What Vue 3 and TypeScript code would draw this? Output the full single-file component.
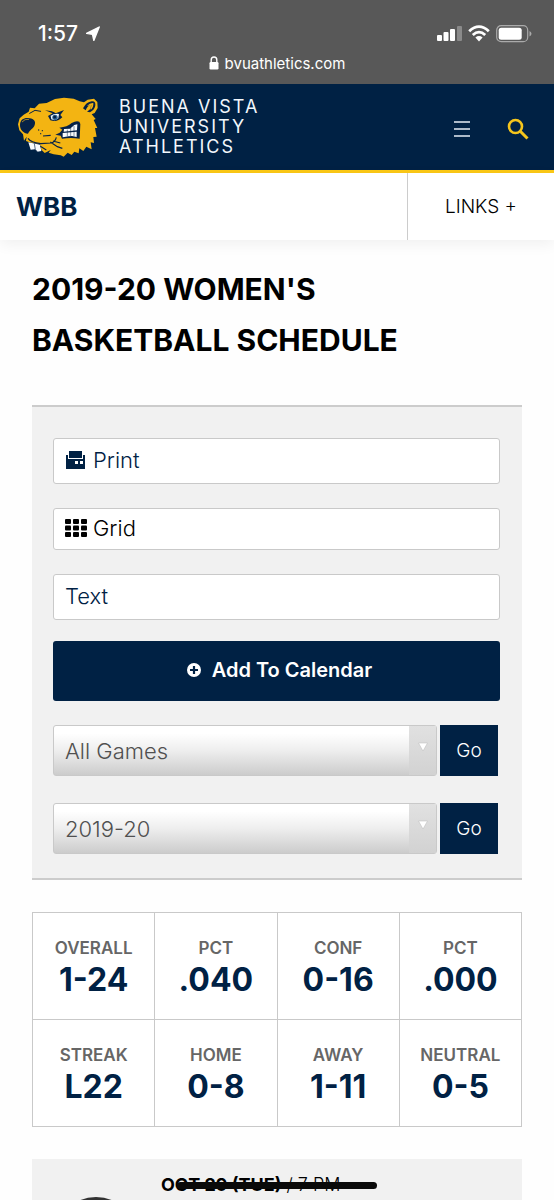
<script setup lang="ts">
import { ref } from 'vue'

interface Stat {
  label: string
  value: string
}

const rows: Stat[][] = [
  [
    { label: 'Overall', value: '1-24' },
    { label: 'Pct', value: '.040' },
    { label: 'Conf', value: '0-16' },
    { label: 'Pct', value: '.000' },
  ],
  [
    { label: 'Streak', value: 'L22' },
    { label: 'Home', value: '0-8' },
    { label: 'Away', value: '1-11' },
    { label: 'Neutral', value: '0-5' },
  ],
]

const games = ref('All Games')
const season = ref('2019-20')
</script>

<template>
  <div class="page">
    <div class="browser">
      <div class="status">
        <div class="clock">
          <span>1:57</span>
          <svg width="14" height="15" viewBox="0 0 14 15" aria-hidden="true">
            <path d="M13.2 1 0.6 7.4 6.5 8.3 7.8 14.4Z" fill="#fff" stroke="#fff" stroke-width="1.4" stroke-linejoin="round" />
          </svg>
        </div>
        <div class="signals">
          <svg width="25" height="17" viewBox="0 0 25 17" aria-hidden="true">
            <g fill="#fff">
              <rect x="0" y="10" width="5" height="6" rx="1" />
              <rect x="6.500" y="7" width="5" height="9" rx="1" />
              <rect x="13" y="4" width="5" height="12" rx="1" />
              <rect x="20" y="1" width="5" height="15" rx="1" opacity="0.3" />
            </g>
          </svg>
          <svg width="22" height="17" viewBox="0 0 22 17" aria-hidden="true">
            <g fill="none" stroke="#fff" stroke-width="2.800">
              <path d="M1.200 6.200Q11-3 20.800 6.200" />
              <path d="M4.800 10Q11 4.200 17.200 10" />
            </g>
            <path d="M7.400 12.500Q11 9.600 14.600 12.500L11 16.400Z" fill="#fff" />
          </svg>
          <svg width="36" height="18" viewBox="0 0 36 18" aria-hidden="true">
            <rect x="0.700" y="0.700" width="31" height="16" rx="4.500" fill="none" stroke="#aaa" stroke-width="1.200" />
            <rect x="2.700" y="2.700" width="23" height="12" rx="2.500" fill="#fff" />
            <path d="M33.500 6Q35.500 7 35.500 8.700T33.500 11.400Z" fill="#aaa" />
          </svg>
        </div>
      </div>
      <div class="address">
        <svg width="10" height="14" viewBox="0 0 10 14" aria-hidden="true">
          <rect x="0.500" y="6" width="9" height="7.500" rx="1.200" fill="#fff" />
          <path d="M2.200 6.500V4Q2.200 1 5 1T7.800 4V6.500" fill="none" stroke="#fff" stroke-width="1.400" />
        </svg>
        <span>bvuathletics.com</span>
      </div>
    </div>

    <header class="masthead">
      <a class="brand" href="#">
        <svg class="logo" viewBox="50 286 249 189" aria-hidden="true">
          <path
            fill="#f3b412"
            d="M85 333 89 321 103 323 116 309 139 307 164 295 191 291 220 294 238 302 251 305 262 297 281 294 291 304 292 322 283 337 274 341 286 355 280 358 291 382 284 382 289 408 279 409 281 427 271 425 274 446 258 438 249 451 237 443 235 458 222 453 214 463 202 456 190 468 181 464 160 461 145 456 151 448 133 457 123 447 119 430 87 425 77 421 79 408 71 420 68 401 57 389 53 371 58 353 70 342Z"
          />
          <path fill="#062247" d="M59 372C60 356 72 350 88 353C101 355 107 363 103 373C100 384 89 386 83 399C70 398 58 387 59 372Z" />
          <path fill="none" stroke="#f3b412" stroke-width="2" d="M65 364Q73 354 86 356" />
          <path fill="none" stroke="#062247" stroke-width="3" stroke-linecap="round" d="M88 338 104 329 121 332" />
          <path fill="#062247" d="M134 329Q159 331 166 338L191 328 180 343 186 350Q171 366 150 359L143 346 157 338Z" />
          <path fill="#f4f8fb" d="M151 345Q162 338 176 340L174 353Q165 362 153 356Z" />
          <circle cx="164" cy="350" r="8" fill="#2d6698" />
          <circle cx="163" cy="349" r="4.500" fill="#062247" />
          <path fill="#062247" d="M248 323Q258 304 274 302Q286 300 285 314Q284 327 269 335L260 333 271 324 272 312Q260 316 256 329Z" />
          <path fill="#f3b412" d="M260 316Q269 306 279 307Q280 320 271 328L273 314Z" />
          <path fill="#062247" d="M177 381Q201 379 214 367 228 359 237 363L240 370 238 414Q211 410 185 414L181 405 165 402 178 396 186 387Z" />
          <path fill="#f8fbfd" d="M191 385 209 384 222 373 231 371 230 389 190 393Z" />
          <path fill="#f8fbfd" d="M187 397 229 393 229 409 215 406 205 407 187 410Z" />
          <path fill="none" stroke="#062247" stroke-width="1.500" d="M201 387V407M211 382V406M221 376V407" />
          <path fill="#f8fbfd" d="M84 425 119 432 123 451 111 453 104 446 91 447Z" />
          <path fill="none" stroke="#062247" stroke-width="2" d="M102 429 105 447 111 453" />
          <path fill="none" stroke="#062247" stroke-width="3.500" d="M83 413Q91 425 121 429L151 427Q164 425 168 410M150 424 171 438 186 443M158 421 180 427M128 406 151 404M120 437 138 448" />
          <g fill="#062247">
            <circle cx="115" cy="388" r="2" />
            <circle cx="126" cy="390" r="2" />
            <circle cx="121" cy="399" r="2" />
          </g>
        </svg>
        <span class="brand-name">Buena Vista<br />University<br />Athletics</span>
      </a>
      <div class="tools">
        <button type="button" class="icon-button" aria-label="Menu">
          <svg width="16" height="18" viewBox="0 0 16 18" aria-hidden="true">
            <path d="M0 2H16M0 9H16M0 16H16" stroke="#e6edf5" stroke-width="1.500" />
          </svg>
        </button>
        <button type="button" class="icon-button" aria-label="Search">
          <svg width="22" height="22" viewBox="0 0 22 22" aria-hidden="true">
            <circle cx="8.500" cy="8.500" r="6.500" fill="none" stroke="#f5c51c" stroke-width="2.600" />
            <path d="M13 13 20.500 20.500" stroke="#f5c51c" stroke-width="3" />
          </svg>
        </button>
      </div>
    </header>

    <nav class="subnav">
      <a class="sport" href="#">WBB</a>
      <button type="button" class="links">LINKS +</button>
    </nav>

    <main class="content">
      <h1>2019-20 WOMEN'S BASKETBALL SCHEDULE</h1>

      <section class="panel">
        <a class="option" href="#">
          <svg width="22" height="18" viewBox="0 0 22 18" aria-hidden="true">
            <path
              fill="#002144"
              fill-rule="evenodd"
              d="M4 0H17V7H4ZM1 4H3V8H18V4H20V18H1ZM10 10V13H13V10ZM15 10V13H18V10Z"
            />
          </svg>
          <span>Print</span>
        </a>
        <a class="option grid-option" href="#">
          <svg width="22" height="18" viewBox="0 0 22 18" aria-hidden="true">
            <g fill="#000">
              <rect x="0" y="0" width="6" height="5" rx="1" />
              <rect x="8" y="0" width="6" height="5" rx="1" />
              <rect x="16" y="0" width="6" height="5" rx="1" />
              <rect x="0" y="6.500" width="6" height="5" rx="1" />
              <rect x="8" y="6.500" width="6" height="5" rx="1" />
              <rect x="16" y="6.500" width="6" height="5" rx="1" />
              <rect x="0" y="13" width="6" height="5" rx="1" />
              <rect x="8" y="13" width="6" height="5" rx="1" />
              <rect x="16" y="13" width="6" height="5" rx="1" />
            </g>
          </svg>
          <span>Grid</span>
        </a>
        <a class="option" href="#"><span>Text</span></a>
        <button type="button" class="calendar">
          <svg width="14" height="14" viewBox="0 0 14 14" aria-hidden="true">
            <circle cx="7" cy="7" r="7" fill="#fff" />
            <path d="M7 3V11M3 7H11" stroke="#002144" stroke-width="2.200" />
          </svg>
          <span>Add To Calendar</span>
        </button>
        <form class="filter" @submit.prevent>
          <div class="select">
            <select v-model="games" aria-label="Games">
              <option>All Games</option>
            </select>
            <span class="arrow">
              <svg width="10" height="10" viewBox="0 0 10 10" aria-hidden="true"><path d="M0.500 1H9.500L5 9Z" fill="#fff" stroke="#bbb" stroke-width="0.500" /></svg>
            </span>
          </div>
          <button type="submit">Go</button>
        </form>
        <form class="filter" @submit.prevent>
          <div class="select">
            <select v-model="season" aria-label="Season">
              <option>2019-20</option>
            </select>
            <span class="arrow">
              <svg width="10" height="10" viewBox="0 0 10 10" aria-hidden="true"><path d="M0.500 1H9.500L5 9Z" fill="#fff" stroke="#bbb" stroke-width="0.500" /></svg>
            </span>
          </div>
          <button type="submit">Go</button>
        </form>
      </section>

      <table class="record">
        <tbody>
          <tr v-for="(row, r) in rows" :key="r">
            <td v-for="(stat, c) in row" :key="c">
              <span class="stat-label">{{ stat.label }}</span>
              <strong class="stat-value">{{ stat.value }}</strong>
            </td>
          </tr>
        </tbody>
      </table>

      <article class="game">
        <p class="game-date"><strong>OCT 29 (TUE)</strong> / 7 PM<span class="strike"></span></p>
        <svg class="opponent" width="80" height="80" viewBox="0 0 80 80" aria-hidden="true">
          <circle cx="40" cy="40" r="38" fill="#444" stroke="#333" stroke-width="4" />
        </svg>
      </article>
    </main>
  </div>
</template>

<style>
body {
  margin: 0;
  background: #fff;
}
</style>

<style scoped>
.page {
  height: 100vh;
  overflow: hidden;
  background: #fefefe;
  color: #000;
  font-family: Inter, "Liberation Sans", sans-serif;
}

.page * {
  box-sizing: border-box;
}

svg {
  display: block;
  flex: none;
}

button,
select {
  margin: 0;
  border: 0;
  font-family: inherit;
}

a {
  color: inherit;
  text-decoration: none;
}

.browser {
  height: 84px;
  padding-top: 20px;
  background: #585858;
  color: #fff;
}

.status {
  display: flex;
  align-items: center;
  justify-content: space-between;
  height: 27px;
  padding: 0 22px 0 38px;
}

.clock {
  display: flex;
  align-items: center;
  gap: 8px;
  font-size: 21px;
  font-weight: 500;
}

.signals {
  display: flex;
  align-items: center;
  gap: 6px;
}

.address {
  display: flex;
  align-items: center;
  justify-content: center;
  gap: 6px;
  height: 32px;
  font-size: 15px;
}

.masthead {
  display: flex;
  align-items: center;
  justify-content: space-between;
  height: 89px;
  padding: 0 25px 0 17px;
  border-bottom: 3px solid #fcc917;
  background: #002144;
  color: #f2f7fc;
}

.brand {
  display: flex;
  align-items: center;
  gap: 19px;
}

.logo {
  width: 83px;
  height: 63px;
}

.brand-name {
  font-size: 18px;
  line-height: 20px;
  letter-spacing: 2px;
  text-transform: uppercase;
}

.tools {
  display: flex;
  align-items: center;
  gap: 37px;
  padding-top: 4px;
}

.icon-button {
  padding: 0;
  background: none;
}

.subnav {
  display: flex;
  justify-content: space-between;
  height: 67px;
  background: #fff;
  box-shadow: 0 4px 14px rgba(0, 0, 0, 0.06);
}

.sport {
  display: flex;
  align-items: center;
  padding-left: 16px;
  color: #002144;
  font-size: 26px;
  font-weight: 700;
}

.links {
  width: 147px;
  border-left: 1px solid #ccc;
  background: none;
  color: #000;
  font-size: 19px;
  font-weight: 300;
}

.content {
  display: flex;
  flex-direction: column;
  gap: 32px;
  padding: 24px 32px 0;
}

h1 {
  max-width: 400px;
  margin: 0 0 7px;
  font-size: 30px;
  font-weight: 700;
  line-height: 51px;
}

.panel {
  display: flex;
  flex-direction: column;
  padding: 31px 22px 24px 21px;
  border-top: 2px solid #ccc;
  border-bottom: 2px solid #ccc;
  background: #f1f1f1;
}

.option {
  display: flex;
  align-items: center;
  gap: 6px;
  height: 46px;
  margin-bottom: 24px;
  padding: 0 11px 2px;
  border: 1px solid #c9c9c9;
  border-radius: 3px;
  background: #fff;
  color: #002144;
  font-size: 22px;
  font-weight: 300;
}

.option:nth-of-type(3) {
  margin-bottom: 21px;
}

.grid-option {
  height: 42px;
  color: #000;
}

.calendar {
  display: flex;
  align-items: center;
  justify-content: center;
  gap: 11px;
  height: 60px;
  margin-bottom: 24px;
  padding: 0 0 2px 6px;
  border-radius: 3px;
  background: #002144;
  color: #fff;
  font-size: 20px;
  font-weight: 600;
}

.filter {
  display: flex;
  gap: 3px;
  height: 51px;
  padding-right: 2px;
}

.filter + .filter {
  margin-top: 27px;
}

.select {
  position: relative;
  flex: 1;
}

.select select {
  width: 100%;
  height: 100%;
  padding: 0 40px 0 11px;
  border: 1px solid #c9c9c9;
  border-radius: 3px;
  appearance: none;
  background: linear-gradient(#fff 15%, #eee 50%, #ccc);
  color: #505050;
  font-size: 22px;
  font-weight: 300;
}

.arrow {
  position: absolute;
  top: 1px;
  right: 1px;
  bottom: 1px;
  display: flex;
  justify-content: center;
  width: 27px;
  padding-top: 16px;
  background: linear-gradient(#e1e1e1, #d2d2d2);
  pointer-events: none;
}

.filter button {
  width: 58px;
  background: #002144;
  color: #fff;
  font-size: 19px;
  font-weight: 300;
}

.record {
  width: 100%;
  border-collapse: collapse;
  table-layout: fixed;
}

.record td {
  height: 107px;
  padding: 4px 0 0;
  border: 1px solid #c9c9c9;
  background: #fff;
  text-align: center;
  vertical-align: middle;
}

.stat-label,
.stat-value {
  display: block;
}

.stat-label {
  color: #666;
  font-size: 17px;
  font-weight: 600;
  line-height: 24px;
  text-transform: uppercase;
}

.stat-value {
  color: #002144;
  font-size: 32px;
  font-weight: 700;
  line-height: 40px;
}

.game {
  padding: 14px 40px 24px 24px;
  background: #f1f1f1;
}

.game-date {
  position: relative;
  width: 216px;
  margin: 0 auto;
  font-size: 18px;
  font-weight: 300;
  line-height: 24px;
  white-space: nowrap;
}

.game-date strong {
  font-weight: 700;
}

.strike {
  position: absolute;
  top: 9px;
  right: 0;
  left: 16px;
  height: 7px;
  border-radius: 4px;
  background: #0a0a0a;
}
</style>
